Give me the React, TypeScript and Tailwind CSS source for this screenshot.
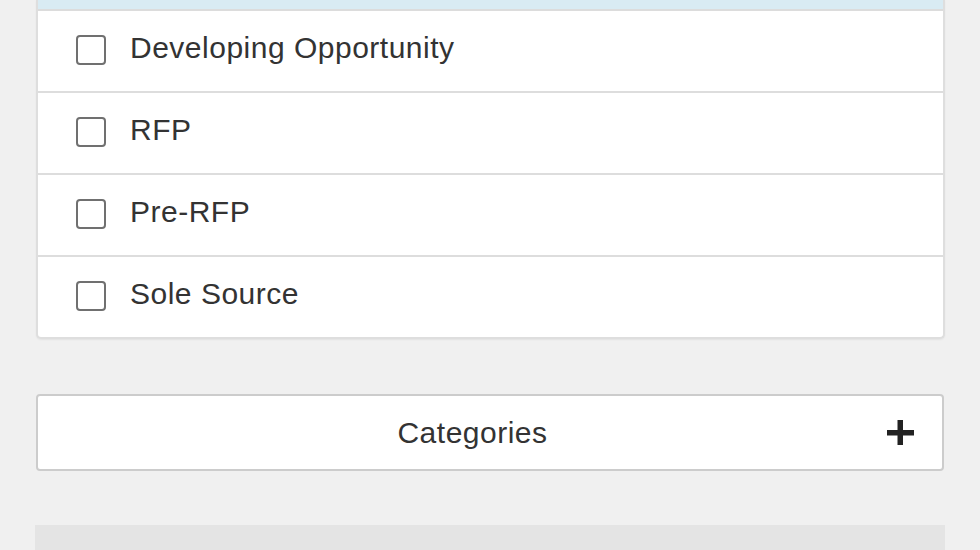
const options = ["Developing Opportunity", "RFP", "Pre-RFP", "Sole Source"];

export default function App() {
  return (
    <div
      className="w-[980px] h-[550px] overflow-hidden bg-[#f0f0f0] px-[35px] text-[#333]"
      style={{ fontFamily: '"Liberation Sans", Arial, sans-serif' }}
    >
      {/* Filter panel */}
      <div className="w-[909px] ml-px rounded-b-[5px] border-x-2 border-b-2 border-[#dedede] bg-white shadow-[0_1px_2px_rgba(0,0,0,0.06)]">
        <div className="h-[11px] bg-[#d9ebf3] border-b-2 border-[#dcdcdc]" />
        {options.map((label, i) => (
          <label
            key={label}
            className={`flex items-center pl-[38px] ${
              i < options.length - 1 ? "h-[82px] border-b-2 border-[#dddddd]" : "h-[80px]"
            }`}
          >
            <span className="mt-[-2px] mr-[24px] h-[30px] w-[30px] shrink-0 rounded-[4px] border-2 border-[#707070] bg-white" />
            <span className="mt-[-6px] text-[30px] leading-none tracking-[0.5px]">{label}</span>
          </label>
        ))}
      </div>

      {/* Categories toggle */}
      <div className="mt-[55px] ml-px flex h-[77px] w-[908px] items-center rounded-[4px] border-2 border-[#cccccc] bg-white">
        <span className="flex-1 pl-[20px] text-center text-[30px] leading-none tracking-[0.5px] text-[#333]">
          Categories
        </span>
        <svg width="27" height="25" viewBox="0 0 27 25" className="mr-[28px]">
          <rect x="0" y="10" width="27" height="5.5" fill="#222" />
          <rect x="10.5" y="0" width="5.5" height="25" fill="#222" />
        </svg>
      </div>

      {/* Next section header */}
      <div className="mt-[54px] h-[40px] w-[910px] bg-[#e4e4e4]" />
    </div>
  );
}
